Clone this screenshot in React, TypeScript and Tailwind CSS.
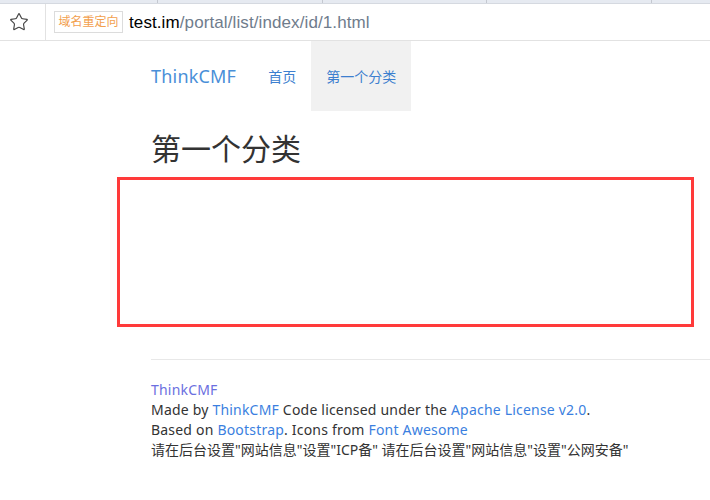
import { Star } from 'lucide-react';

const font = { fontFamily: '"Noto Sans", "Noto Sans CJK SC", sans-serif' };

export default function App() {
  return (
    <div className="w-[710px] h-[500px] overflow-hidden bg-white text-[#333]" style={font}>
      {/* 标签栏 */}
      <div className="flex h-[4px] bg-[#e6eaf1] border-b border-[#d5d9e0]">
        <div className="w-[158px] border-r border-[#c4c8d0]" />
        <div className="w-[165px] border-r border-[#c4c8d0]" />
        <div className="w-[164px] border-r border-[#c4c8d0]" />
        <div className="w-[165px] border-r border-[#c4c8d0]" />
      </div>

      {/* 地址栏 */}
      <div className="flex h-[37px] items-center border-b border-[#e2e2e2]">
        <div className="flex w-[46px] h-full items-center justify-center border-r border-[#e2e2e2] pr-[8px]">
          <Star size={20} strokeWidth={1.4} className="text-[#444]" />
        </div>
        <div className="ml-[8px] flex h-[22px] w-[69px] items-center justify-center border border-[#dcdcdc] text-[12px] leading-none text-[#f2a04e]">
          域名重定向
        </div>
        <div className="ml-[6px] text-[17px] leading-none tracking-[0.1px]" style={{ fontFamily: '"Liberation Sans", sans-serif' }}>
          <span className="text-black">test.im</span>
          <span className="text-[#6f7c8c]">/portal/list/index/id/1.html</span>
        </div>
      </div>

      {/* 导航 */}
      <div className="flex h-[70px] items-stretch pl-[151px]">
        <a className="flex items-center pr-[17px] text-[18px] tracking-[0.2px] text-[#4a8fd8]">ThinkCMF</a>
        <a className="flex items-center px-[15px] text-[14px] text-[#3d7fcf]">首页</a>
        <a className="flex w-[100px] items-center justify-center bg-[#f1f1f1] text-[14px] text-[#3d7fcf]">
          第一个分类
        </a>
      </div>

      {/* 标题 */}
      <h1 className="ml-[151px] mt-[21px] text-[30px] leading-[33px] font-normal text-[#333]">第一个分类</h1>

      {/* 红框 */}
      <div className="ml-[117px] mt-[12px] h-[150px] w-[577px] border-[3px] border-[#ff3a3a]" />

      {/* 页脚 */}
      <div className="ml-[151px] mt-[32px] border-t border-[#e8e8e8] pt-[20px] text-[14px] leading-[20px] text-[#333]">
        <div className="text-[#6b6fe0] tracking-[0.2px]">ThinkCMF</div>
        <div className="tracking-[0.2px]">
          Made by <a className="text-[#3b7fe0]">ThinkCMF</a> Code licensed under the{' '}
          <a className="text-[#3b7fe0]">Apache License v2.0</a>.
        </div>
        <div className="tracking-[0.2px]">
          Based on <a className="text-[#3b7fe0]">Bootstrap</a>. Icons from{' '}
          <a className="text-[#3b7fe0]">Font Awesome</a>
        </div>
        <div className="text-[#333]">
          请在后台设置"网站信息"设置"ICP备" 请在后台设置"网站信息"设置"公网安备"
        </div>
      </div>
    </div>
  );
}
